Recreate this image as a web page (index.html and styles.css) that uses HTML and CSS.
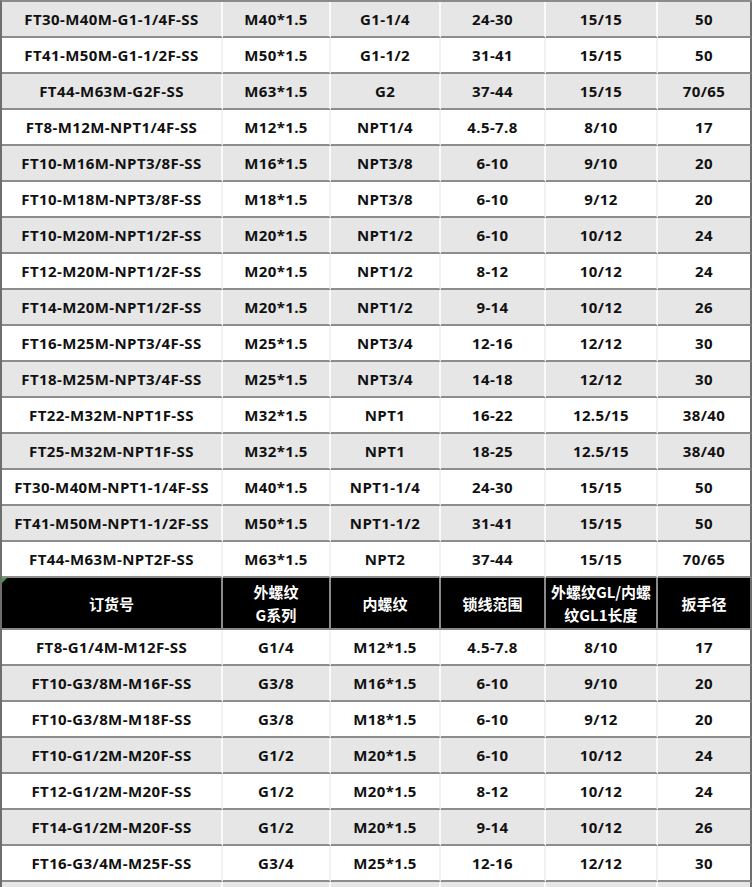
FILE: index.html
```html
<!DOCTYPE html>
<html lang="zh">
<head>
<meta charset="utf-8">
<title>规格表</title>
<link rel="stylesheet" href="styles.css">
</head>
<body>
<div class="sheet">
  <div class="row alt"><div class="c">FT30-M40M-G1-1/4F-SS</div><div class="c">M40*1.5</div><div class="c">G1-1/4</div><div class="c">24-30</div><div class="c">15/15</div><div class="c">50</div></div>
  <div class="row"><div class="c">FT41-M50M-G1-1/2F-SS</div><div class="c">M50*1.5</div><div class="c">G1-1/2</div><div class="c">31-41</div><div class="c">15/15</div><div class="c">50</div></div>
  <div class="row alt"><div class="c">FT44-M63M-G2F-SS</div><div class="c">M63*1.5</div><div class="c">G2</div><div class="c">37-44</div><div class="c">15/15</div><div class="c">70/65</div></div>
  <div class="row"><div class="c">FT8-M12M-NPT1/4F-SS</div><div class="c">M12*1.5</div><div class="c">NPT1/4</div><div class="c">4.5-7.8</div><div class="c">8/10</div><div class="c">17</div></div>
  <div class="row alt"><div class="c">FT10-M16M-NPT3/8F-SS</div><div class="c">M16*1.5</div><div class="c">NPT3/8</div><div class="c">6-10</div><div class="c">9/10</div><div class="c">20</div></div>
  <div class="row"><div class="c">FT10-M18M-NPT3/8F-SS</div><div class="c">M18*1.5</div><div class="c">NPT3/8</div><div class="c">6-10</div><div class="c">9/12</div><div class="c">20</div></div>
  <div class="row alt"><div class="c">FT10-M20M-NPT1/2F-SS</div><div class="c">M20*1.5</div><div class="c">NPT1/2</div><div class="c">6-10</div><div class="c">10/12</div><div class="c">24</div></div>
  <div class="row"><div class="c">FT12-M20M-NPT1/2F-SS</div><div class="c">M20*1.5</div><div class="c">NPT1/2</div><div class="c">8-12</div><div class="c">10/12</div><div class="c">24</div></div>
  <div class="row alt"><div class="c">FT14-M20M-NPT1/2F-SS</div><div class="c">M20*1.5</div><div class="c">NPT1/2</div><div class="c">9-14</div><div class="c">10/12</div><div class="c">26</div></div>
  <div class="row"><div class="c">FT16-M25M-NPT3/4F-SS</div><div class="c">M25*1.5</div><div class="c">NPT3/4</div><div class="c">12-16</div><div class="c">12/12</div><div class="c">30</div></div>
  <div class="row alt"><div class="c">FT18-M25M-NPT3/4F-SS</div><div class="c">M25*1.5</div><div class="c">NPT3/4</div><div class="c">14-18</div><div class="c">12/12</div><div class="c">30</div></div>
  <div class="row"><div class="c">FT22-M32M-NPT1F-SS</div><div class="c">M32*1.5</div><div class="c">NPT1</div><div class="c">16-22</div><div class="c">12.5/15</div><div class="c">38/40</div></div>
  <div class="row alt"><div class="c">FT25-M32M-NPT1F-SS</div><div class="c">M32*1.5</div><div class="c">NPT1</div><div class="c">18-25</div><div class="c">12.5/15</div><div class="c">38/40</div></div>
  <div class="row"><div class="c">FT30-M40M-NPT1-1/4F-SS</div><div class="c">M40*1.5</div><div class="c">NPT1-1/4</div><div class="c">24-30</div><div class="c">15/15</div><div class="c">50</div></div>
  <div class="row alt"><div class="c">FT41-M50M-NPT1-1/2F-SS</div><div class="c">M50*1.5</div><div class="c">NPT1-1/2</div><div class="c">31-41</div><div class="c">15/15</div><div class="c">50</div></div>
  <div class="row"><div class="c">FT44-M63M-NPT2F-SS</div><div class="c">M63*1.5</div><div class="c">NPT2</div><div class="c">37-44</div><div class="c">15/15</div><div class="c">70/65</div></div>
  <div class="row head"><div class="c first">订货号</div><div class="c">外螺纹<br>G系列</div><div class="c">内螺纹</div><div class="c">锁线范围</div><div class="c">外螺纹GL/内螺<br>纹GL1长度</div><div class="c">扳手径</div></div>
  <div class="row"><div class="c">FT8-G1/4M-M12F-SS</div><div class="c">G1/4</div><div class="c">M12*1.5</div><div class="c">4.5-7.8</div><div class="c">8/10</div><div class="c">17</div></div>
  <div class="row alt"><div class="c">FT10-G3/8M-M16F-SS</div><div class="c">G3/8</div><div class="c">M16*1.5</div><div class="c">6-10</div><div class="c">9/10</div><div class="c">20</div></div>
  <div class="row"><div class="c">FT10-G3/8M-M18F-SS</div><div class="c">G3/8</div><div class="c">M18*1.5</div><div class="c">6-10</div><div class="c">9/12</div><div class="c">20</div></div>
  <div class="row alt"><div class="c">FT10-G1/2M-M20F-SS</div><div class="c">G1/2</div><div class="c">M20*1.5</div><div class="c">6-10</div><div class="c">10/12</div><div class="c">24</div></div>
  <div class="row"><div class="c">FT12-G1/2M-M20F-SS</div><div class="c">G1/2</div><div class="c">M20*1.5</div><div class="c">8-12</div><div class="c">10/12</div><div class="c">24</div></div>
  <div class="row alt"><div class="c">FT14-G1/2M-M20F-SS</div><div class="c">G1/2</div><div class="c">M20*1.5</div><div class="c">9-14</div><div class="c">10/12</div><div class="c">26</div></div>
  <div class="row"><div class="c">FT16-G3/4M-M25F-SS</div><div class="c">G3/4</div><div class="c">M25*1.5</div><div class="c">12-16</div><div class="c">12/12</div><div class="c">30</div></div>
  <div class="row alt"><div class="c"></div><div class="c"></div><div class="c"></div><div class="c"></div><div class="c"></div><div class="c"></div></div>
</div>
</body>
</html>
```

FILE: styles.css
```css
html, body {
  margin: 0;
  padding: 0;
  background: #ffffff;
}
body {
  overflow: hidden;
  height: 887px;
}
.sheet {
  width: 752px;
  box-sizing: border-box;
  border-top: 2px solid #8a8a8a;
  border-left: 2px solid #6e6e6e;
  font-family: "Open Sans", "Noto Sans CJK SC", sans-serif;
  font-weight: 700;
  font-size: 15px;
  letter-spacing: 0.4px;
  color: #111111;
}
.row {
  display: grid;
  grid-template-columns: 221px 108px 110px 105px 112px 94px;
  height: 36px;
  background: #ffffff;
}
.row.alt {
  background: #e6e6e6;
}
.c {
  box-sizing: border-box;
  display: flex;
  align-items: center;
  justify-content: center;
  text-align: center;
  border-bottom: 2px solid #8c8c8c;
  border-right: 2px solid #f2f2f2;
  white-space: nowrap;
  line-height: 1;
}
.row.alt .c {
  border-right-color: #fafafa;
}
.c:last-child {
  border-right-color: #6e6e6e;
}
.row.alt .c:last-child {
  border-right-color: #6e6e6e;
}
.row.head {
  height: 52px;
  background: #000000;
  color: #ffffff;
  font-family: "Noto Sans CJK SC", "Open Sans", sans-serif;
  font-size: 15px;
  letter-spacing: 0;
}
.row.head .c {
  border-right-color: #8a8a8a;
  border-bottom-color: #8a8a8a;
  line-height: 23px;
  position: relative;
}
.row.head .c:last-child {
  border-right-color: #6e6e6e;
}
.row.head .c.first::before {
  content: "";
  position: absolute;
  left: 0;
  top: 0;
  border-top: 5px solid #3aa53a;
  border-right: 5px solid transparent;
}
```
